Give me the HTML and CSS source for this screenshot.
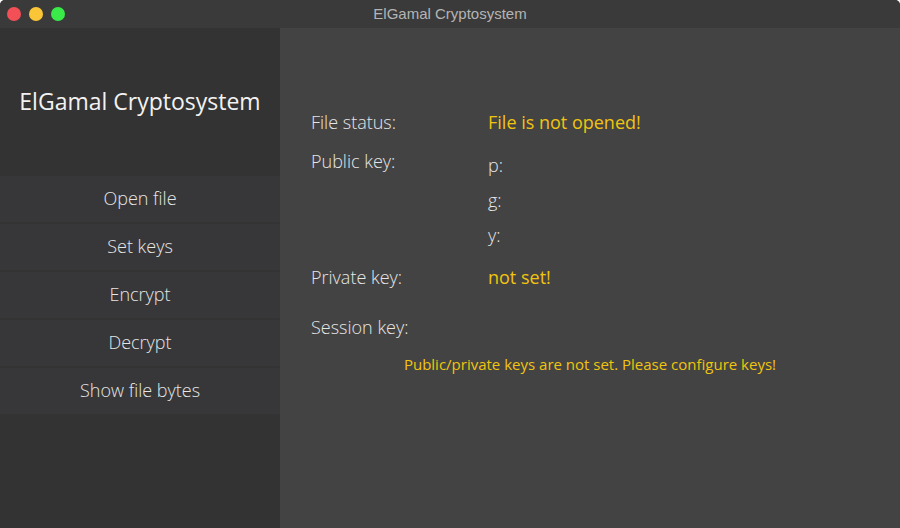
FILE: index.html
```html
<!DOCTYPE html>
<html lang="en">
<head>
<meta charset="utf-8">
<title>ElGamal Cryptosystem</title>
<link rel="stylesheet" href="styles.css">
</head>
<body>
<div class="window">
  <header class="titlebar">
    <div class="controls">
      <button class="dot close" aria-label="Close"></button>
      <button class="dot minimize" aria-label="Minimize"></button>
      <button class="dot zoom" aria-label="Zoom"></button>
    </div>
    <span class="caption">ElGamal Cryptosystem</span>
  </header>
  <div class="body">
    <nav class="sidebar">
      <h1 class="brand">ElGamal Cryptosystem</h1>
      <button class="item">Open file</button>
      <button class="item">Set keys</button>
      <button class="item">Encrypt</button>
      <button class="item">Decrypt</button>
      <button class="item">Show file bytes</button>
    </nav>
    <main class="content">
      <dl class="info">
        <dt>File status:</dt>
        <dd class="warn">File is not opened!</dd>
        <dt>Public key:</dt>
        <dd class="parts"><span>p:</span><span>g:</span><span>y:</span></dd>
        <dt>Private key:</dt>
        <dd class="warn">not set!</dd>
        <dt class="session">Session key:</dt>
        <dd></dd>
      </dl>
      <p class="message">Public/private keys are not set. Please configure keys!</p>
    </main>
  </div>
</div>
</body>
</html>
```

FILE: styles.css
```css
* { box-sizing: border-box; }
html { background: #fff; }
body {
  margin: 0;
  font-family: "Open Sans", sans-serif;
  font-size: 18px;
  font-weight: 300;
  line-height: 24px;
  color: #e6e6e6;
}
.window {
  display: flex;
  flex-direction: column;
  min-height: 100vh;
  background: #434343;
  border-radius: 5px 5px 0 0;
  overflow: hidden;
}
.titlebar {
  display: grid;
  grid-template-columns: 1fr auto 1fr;
  align-items: center;
  height: 28px;
  padding: 0 7px;
  background: #3a3a3a;
}
.controls { display: flex; gap: 8px; }
.dot {
  width: 14px;
  height: 14px;
  padding: 0;
  border: 0;
  border-radius: 50%;
}
.close { background: #f25056; }
.minimize { background: #fac536; }
.zoom { background: #39ea49; }
.caption {
  font: 400 15px/20px "Liberation Sans", sans-serif;
  color: #b4b4b4;
}
.body { display: flex; flex: 1; }
.sidebar {
  display: flex;
  flex-direction: column;
  gap: 2px;
  width: 280px;
  background: #333;
}
.brand {
  margin: 0;
  padding: 57px 0;
  font-size: 23px;
  font-weight: 400;
  line-height: 32px;
  text-align: center;
  color: #f2f2f2;
}
.item {
  height: 46px;
  padding: 0 0 2px;
  border: 0;
  background: #373739;
  color: inherit;
  font: inherit;
}
.content { flex: 1; padding: 82px 31px; }
.info {
  display: grid;
  grid-template-columns: 177px 1fr;
  row-gap: 15px;
  margin: 0;
}
.info dd { margin: 0; }
.parts {
  display: flex;
  flex-direction: column;
  gap: 11px;
  padding: 4px 0 3px;
}
.warn { font-weight: 400; color: #f1c40f; }
.session { padding-top: 11px; }
.message {
  margin: 13px 0 0;
  font-size: 15px;
  font-weight: 400;
  text-align: center;
  color: #f1c40f;
}
```
